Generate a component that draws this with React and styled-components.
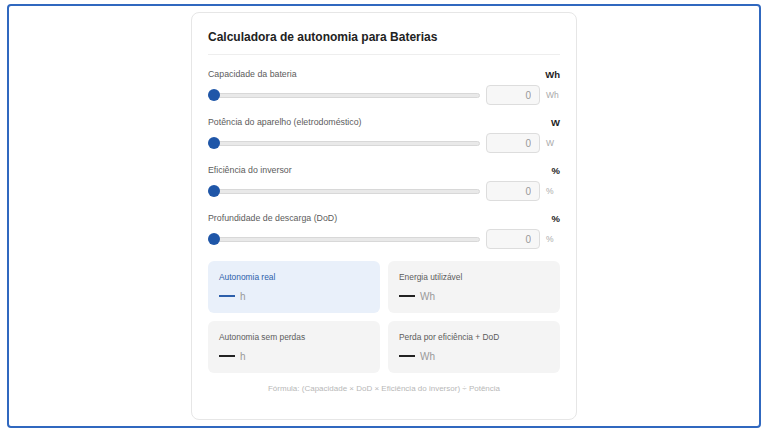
import React, { useState } from "react";
import styled, { createGlobalStyle } from "styled-components";

const GlobalStyle = createGlobalStyle`
  html, body {
    margin: 0;
    padding: 0;
    background: #ffffff;
    font-family: "Liberation Sans", Arial, sans-serif;
  }
  * { box-sizing: border-box; }
`;

const fields = [
  { key: "cap", label: "Capacidade da bateria", unit: "Wh", max: 10000 },
  { key: "pot", label: "Potência do aparelho (eletrodoméstico)", unit: "W", max: 5000 },
  { key: "ef", label: "Eficiência do inversor", unit: "%", max: 100 },
  { key: "dod", label: "Profundidade de descarga (DoD)", unit: "%", max: 100 },
];

const results = [
  { label: "Autonomia real", unit: "h", highlight: true },
  { label: "Energia utilizável", unit: "Wh" },
  { label: "Autonomia sem perdas", unit: "h" },
  { label: "Perda por eficiência + DoD", unit: "Wh" },
];

function App() {
  const [values, setValues] = useState({ cap: 0, pot: 0, ef: 0, dod: 0 });

  function update(key, v) {
    setValues({ ...values, [key]: Number(v) || 0 });
  }

  return (
    <Frame>
      <GlobalStyle />
      <Card>
        <Title>Calculadora de autonomia para Baterias</Title>
        {fields.map((f) => (
          <Field key={f.key}>
            <LabelRow>
              <Label>{f.label}</Label>
              <UnitBold>{f.unit}</UnitBold>
            </LabelRow>
            <Controls>
              <Range
                type="range"
                min="0"
                max={f.max}
                value={values[f.key]}
                onChange={(e) => update(f.key, e.target.value)}
              />
              <NumberBox
                type="text"
                value={values[f.key]}
                onChange={(e) => update(f.key, e.target.value)}
              />
              <UnitSmall>{f.unit}</UnitSmall>
            </Controls>
          </Field>
        ))}
        <Results>
          {results.map((r) => (
            <ResultCard key={r.label} $highlight={r.highlight}>
              <ResultLabel $highlight={r.highlight}>{r.label}</ResultLabel>
              <ResultValue>
                <Dash $highlight={r.highlight} />
                <ResultUnit>{r.unit}</ResultUnit>
              </ResultValue>
            </ResultCard>
          ))}
        </Results>
        <Formula>
          Fórmula: (Capacidade × DoD × Eficiência do inversor) ÷ Potência
        </Formula>
      </Card>
    </Frame>
  );
}

export default App;

const Frame = styled.div`
  margin: 4px 7px;
  height: 424px;
  border: 2px solid #3068bf;
  border-radius: 4px;
  padding-top: 6px;
  display: flex;
  justify-content: center;
  align-items: flex-start;
`;

const Card = styled.div`
  width: 386px;
  background: #ffffff;
  border: 1px solid #e6e6e6;
  border-radius: 8px;
  padding: 16px 16px 24px;
`;

const Title = styled.h1`
  margin: 0 0 12px;
  padding-bottom: 9px;
  border-bottom: 1px solid #eeeeee;
  font-size: 12px;
  line-height: 16px;
  font-weight: 700;
  color: #222222;
`;

const Field = styled.div`
  margin-bottom: 10px;
`;

const LabelRow = styled.div`
  display: flex;
  justify-content: space-between;
  align-items: center;
  height: 14px;
  margin-bottom: 4px;
`;

const Label = styled.span`
  font-size: 8.8px;
  color: #5c5c5c;
`;

const UnitBold = styled.span`
  font-size: 9.5px;
  font-weight: 700;
  color: #222222;
`;

const Controls = styled.div`
  display: flex;
  align-items: center;
  height: 20px;
  gap: 6px;
`;

const Range = styled.input`
  flex: 1;
  margin: 0;
  height: 12px;
  -webkit-appearance: none;
  appearance: none;
  background: transparent;

  &::-webkit-slider-runnable-track {
    height: 5px;
    background: #e9e9e9;
    border: 1px solid #d8d8d8;
    border-radius: 3px;
  }
  &::-webkit-slider-thumb {
    -webkit-appearance: none;
    width: 12px;
    height: 12px;
    margin-top: -4.5px;
    margin-left: -1px;
    border-radius: 50%;
    background: #1f56a8;
    border: none;
  }
`;

const NumberBox = styled.input`
  width: 54px;
  height: 20px;
  border: 1px solid #dddddd;
  border-radius: 4px;
  background: #f7f7f7;
  text-align: right;
  padding: 0 8px;
  font-family: "Liberation Sans", Arial, sans-serif;
  font-size: 10px;
  color: #999999;
  outline: none;
`;

const UnitSmall = styled.span`
  width: 14px;
  font-size: 8.5px;
  color: #aaaaaa;
`;

const Results = styled.div`
  display: grid;
  grid-template-columns: 1fr 1fr;
  gap: 8px;
  margin-top: 12px;
`;

const ResultCard = styled.div`
  background: ${(p) => (p.$highlight ? "#e9f0fa" : "#f4f4f4")};
  border-radius: 6px;
  padding: 10px 11px;
  height: 52px;
`;

const ResultLabel = styled.div`
  font-size: 8.4px;
  line-height: 12px;
  color: ${(p) => (p.$highlight ? "#2d5faa" : "#5c5c5c")};
`;

const ResultValue = styled.div`
  display: flex;
  align-items: center;
  gap: 5px;
  margin-top: 6px;
  height: 14px;
`;

const Dash = styled.span`
  width: 16px;
  height: 2.5px;
  background: ${(p) => (p.$highlight ? "#2d5faa" : "#222222")};
`;

const ResultUnit = styled.span`
  font-size: 10px;
  color: #999999;
`;

const Formula = styled.div`
  margin-top: 10px;
  text-align: center;
  font-size: 8px;
  line-height: 12px;
  color: #b8b8b8;
`;
